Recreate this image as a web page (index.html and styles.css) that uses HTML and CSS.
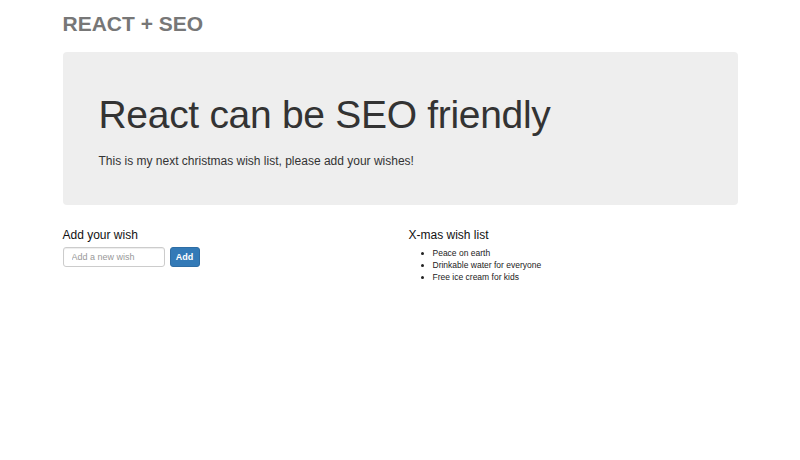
FILE: index.html
```html
<!DOCTYPE html>
<html lang="en">
<head>
    <meta charset="UTF-8">
    <meta name="viewport" content="width=device-width, initial-scale=1.0">
    <title>React + SEO</title>
    <link rel="stylesheet" href="styles.css">
</head>
<body>
    <div class="container">
        <h3 class="site-title">REACT + SEO</h3>

        <div class="jumbotron">
            <h1>React can be SEO friendly</h1>
            <p>This is my next christmas wish list, please add your wishes!</p>
        </div>

        <div class="row">
            <!-- Form to add a wish -->
            <div class="col">
                <h4>Add your wish</h4>
                <form class="wish-form" onsubmit="return false;">
                    <input type="text" class="wish-input" placeholder="Add a new wish">
                    <button type="submit" class="btn-add">Add</button>
                </form>
            </div>

            <!-- Current wish list -->
            <div class="col">
                <h4>X-mas wish list</h4>
                <ul class="wish-list">
                    <li>Peace on earth</li>
                    <li>Drinkable water for everyone</li>
                    <li>Free ice cream for kids</li>
                </ul>
            </div>
        </div>
    </div>
</body>
</html>
```

FILE: styles.css
```css
body {
    margin: 0;
    font-family: "Liberation Sans", Arial, sans-serif;
    background: #fff;
    color: #333;
}

.container {
    width: 675px;
    margin: 0 auto;
    padding-top: 12px;
}

.site-title {
    margin: 0;
    font-size: 21px;
    font-weight: bold;
    color: #777;
    line-height: 24px;
}

.jumbotron {
    margin-top: 16px;
    height: 153px;
    box-sizing: border-box;
    padding: 41px 36px 0;
    background-color: #eee;
    border-radius: 4px;
}

.jumbotron h1 {
    margin: 0;
    font-size: 39px;
    font-weight: normal;
    letter-spacing: -0.3px;
    line-height: 44px;
    color: #333;
}

.jumbotron p {
    margin: 16px 0 0;
    font-size: 12px;
    line-height: 16px;
}

.row {
    display: grid;
    grid-template-columns: 1fr 1fr;
    gap: 17px;
    margin-top: 23px;
}

.col h4 {
    margin: 0 0 5px;
    font-size: 12px;
    font-weight: normal;
    color: #111;
    line-height: 14px;
}

.wish-form {
    display: flex;
    gap: 5px;
}

.wish-input {
    width: 102px;
    height: 20px;
    box-sizing: border-box;
    border: 1px solid #ccc;
    border-radius: 3px;
    padding: 0 8px;
    font-family: inherit;
    font-size: 9px;
    box-shadow: inset 0 1px 1px rgba(0, 0, 0, 0.075);
}

.wish-input::placeholder {
    color: #999;
}

.btn-add {
    width: 30px;
    height: 20px;
    padding: 0;
    border: 1px solid #2e6da4;
    border-radius: 3px;
    background-color: #337ab7;
    color: #fff;
    font-family: inherit;
    font-size: 9px;
    font-weight: bold;
    cursor: pointer;
}

.wish-list {
    margin: 0;
    padding-left: 24px;
    font-size: 8.5px;
    line-height: 12px;
    color: #222;
}
```
